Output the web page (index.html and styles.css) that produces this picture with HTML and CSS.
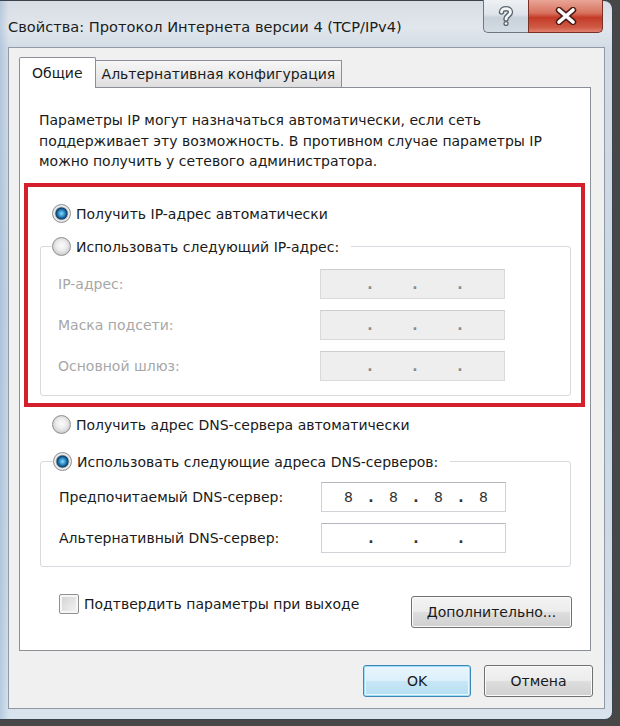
FILE: index.html
```html
<!DOCTYPE html>
<html lang="ru">
<head>
<meta charset="utf-8">
<title>Свойства: Протокол Интернета версии 4 (TCP/IPv4)</title>
<link rel="stylesheet" href="styles.css">
</head>
<body>
<div class="window">
  <div class="titlebar">
    <div class="title">Свойства: Протокол Интернета версии 4 (TCP/IPv4)</div>
    <div class="caption-buttons">
      <div class="cap-btn help">
        <svg width="20" height="22" viewBox="0 0 20 22">
          <path d="M5.5 7 C5.5 2.5 14.5 2.5 14.5 7 C14.5 10.5 10 10.5 10 14" fill="none" stroke="#5b6570" stroke-width="5.5" stroke-linecap="round"/>
          <circle cx="10" cy="18.5" r="2.6" fill="#5b6570"/>
          <path d="M5.5 7 C5.5 2.5 14.5 2.5 14.5 7 C14.5 10.5 10 10.5 10 14" fill="none" stroke="#f4f6f8" stroke-width="2.8" stroke-linecap="round"/>
          <circle cx="10" cy="18.5" r="1.3" fill="#f4f6f8"/>
        </svg>
      </div>
      <div class="cap-btn close">
        <svg width="22" height="18" viewBox="0 0 22 18">
          <path d="M4 3 L18 15 M18 3 L4 15" stroke="#4a1c15" stroke-width="6.5" stroke-linecap="round"/>
          <path d="M4 3 L18 15 M18 3 L4 15" stroke="#ffffff" stroke-width="3.6" stroke-linecap="round"/>
        </svg>
      </div>
    </div>
  </div>

  <div class="client">
    <div class="tabs">
      <div class="tab active">Общие</div>
      <div class="tab">Альтернативная конфигурация</div>
    </div>

    <div class="panel">
      <p class="intro">Параметры IP могут назначаться автоматически, если сеть<br>поддерживает эту возможность. В противном случае параметры IP<br>можно получить у сетевого администратора.</p>

      <div class="highlight">
        <div class="radio-row"><span class="radio checked"></span>Получить IP-адрес автоматически</div>
        <fieldset class="group">
          <legend class="radio-row legend"><span class="radio"></span>Использовать следующий IP-адрес:</legend>
          <div class="field-row disabled">
            <span class="label">IP-адрес:</span>
            <div class="ip"><span></span><span class="dot">.</span><span></span><span class="dot">.</span><span></span><span class="dot">.</span><span></span></div>
          </div>
          <div class="field-row disabled">
            <span class="label">Маска подсети:</span>
            <div class="ip"><span></span><span class="dot">.</span><span></span><span class="dot">.</span><span></span><span class="dot">.</span><span></span></div>
          </div>
          <div class="field-row disabled">
            <span class="label">Основной шлюз:</span>
            <div class="ip"><span></span><span class="dot">.</span><span></span><span class="dot">.</span><span></span><span class="dot">.</span><span></span></div>
          </div>
        </fieldset>
      </div>

      <div class="radio-row dns-auto"><span class="radio"></span>Получить адрес DNS-сервера автоматически</div>
      <fieldset class="group dns">
        <legend class="radio-row legend"><span class="radio checked"></span>Использовать следующие адреса DNS-серверов:</legend>
        <div class="field-row">
          <span class="label">Предпочитаемый DNS-сервер:</span>
          <div class="ip"><span>8</span><span class="dot">.</span><span>8</span><span class="dot">.</span><span>8</span><span class="dot">.</span><span>8</span></div>
        </div>
        <div class="field-row">
          <span class="label">Альтернативный DNS-сервер:</span>
          <div class="ip"><span></span><span class="dot">.</span><span></span><span class="dot">.</span><span></span><span class="dot">.</span><span></span></div>
        </div>
      </fieldset>

      <div class="bottom-row">
        <div class="check-row"><span class="checkbox"></span>Подтвердить параметры при выходе</div>
        <button class="btn advanced">Дополнительно...</button>
      </div>
    </div>

    <div class="dialog-buttons">
      <button class="btn default">OK</button>
      <button class="btn">Отмена</button>
    </div>
  </div>
</div>
</body>
</html>
```

FILE: styles.css
```css
* { box-sizing: border-box; }

html, body {
  margin: 0;
  padding: 0;
}

body {
  width: 620px;
  height: 726px;
  overflow: hidden;
  background: #474747;
  font-family: "DejaVu Sans", "Liberation Sans", sans-serif;
  font-size: 14px;
  color: #1a1a1a;
}

.window {
  width: 613px;
  height: 720px;
  border: 1px solid #3c434b;
  border-left: none;
  border-radius: 0 9px 8px 0;
  background:
    linear-gradient(90deg, rgba(120,160,200,0.35) 0px, rgba(120,160,200,0) 9px),
    linear-gradient(180deg, #d7dde4 0px, #e1e6ec 26px, #d3dce6 46px, #c8d6e4 300px, #cfdbe7 600px, #d8e3ee 720px);
  display: flex;
  flex-direction: column;
}

.titlebar {
  height: 46px;
  display: flex;
  align-items: flex-start;
  padding-left: 8px;
  padding-right: 9px;
}

.title {
  flex: 1;
  padding-top: 16px;
  line-height: 20px;
  font-size: 14.6px;
  color: #1c1c1c;
  white-space: nowrap;
}

.caption-buttons {
  display: flex;
  margin-top: -1px;
}

.cap-btn {
  height: 33px;
  display: flex;
  align-items: center;
  justify-content: center;
  border: 1px solid #6c7782;
  border-top: none;
}

.help {
  width: 45px;
  border-radius: 0 0 0 5px;
  border-right: none;
  background: linear-gradient(180deg, #eef1f4 0%, #dde3e9 45%, #c9d2db 55%, #d3dbe3 100%);
}

.close {
  width: 75px;
  border-color: #7b3026;
  border-radius: 0 0 5px 0;
  background: linear-gradient(180deg, #e9a597 0%, #d9735f 40%, #c43b27 55%, #cf5a45 85%, #e0826e 100%);
}

.client {
  margin-left: 8px;
  width: 597px;
  height: 662px;
  background: #f0f0f0;
  border: 1px solid #8f9aa6;
  padding: 9px 13px 0 10px;
}

.tabs {
  display: flex;
  align-items: flex-end;
  height: 30px;
}

.tab {
  height: 27px;
  line-height: 26px;
  padding: 0 11px;
  border: 1px solid #8c8f96;
  border-bottom: none;
  border-left: none;
  background: linear-gradient(180deg, #f6f6f6 0%, #ebebeb 50%, #dedede 100%);
  color: #1a1a1a;
  white-space: nowrap;
}

.tab.active {
  position: relative;
  z-index: 1;
  height: 31px;
  margin-bottom: -1px;
  line-height: 30px;
  padding: 0 12px;
  border-left: 1px solid #8c8f96;
  border-radius: 2px 2px 0 0;
  background: #ffffff;
}

.tab + .tab {
  width: 246px;
  padding-left: 6px;
}

.panel {
  background: #ffffff;
  border: 1px solid #8a8e95;
  height: 564px;
  padding: 22px 0 0 0;
}

.intro {
  margin: 0 0 0 19px;
  line-height: 20.5px;
}

.highlight {
  margin: 11px 5px 0 4px;
  border: 4px solid #d41f2c;
  padding: 17px 0 7px 0;
}

.radio-row {
  display: flex;
  align-items: center;
  gap: 5px;
  height: 20px;
  line-height: 20px;
  white-space: nowrap;
}

.highlight > .radio-row {
  padding-left: 24px;
}

.radio {
  flex: none;
  width: 19px;
  height: 19px;
  border-radius: 50%;
  border: 1px solid #8d8f91;
  background: radial-gradient(circle at 50% 45%, #fbfbfb 0px, #ececec 5px, #d7d7d7 8px, #c9c9c9 9.5px);
}

.radio.checked {
  background: radial-gradient(circle at 50% 50%, #8fd8f7 0px, #3fa0d6 2.5px, #15629a 4.5px, #0e3e66 5.6px, #9ea4a8 6.3px, #f3f3f3 7.3px, #e2e2e2 8.5px, #cdcdcd 9.5px);
}

.group {
  margin: 13px 10px 0 12px;
  padding: 12px 17px 14px 17px;
  border: 1px solid #d6dadf;
  border-radius: 3px;
  min-width: 0;
}

.legend {
  padding: 0 12px 0 0;
  margin-left: -6px;
}

.field-row {
  display: flex;
  align-items: center;
  height: 30px;
}

.field-row + .field-row {
  margin-top: 11px;
}

.label {
  width: 262px;
  flex: none;
  white-space: nowrap;
}

.ip {
  width: 185px;
  height: 30px;
  display: grid;
  grid-template-columns: 43px 2px 43px 2px 43px 2px 43px;
  align-items: center;
  padding-left: 5px;
  border: 1px solid #cfd3d8;
  border-top-color: #b3b8be;
  background: #ffffff;
  color: #333333;
  line-height: 28px;
}

.ip span {
  text-align: center;
}

.ip .dot {
  display: flex;
  justify-content: center;
  font-weight: bold;
}

.disabled .label {
  color: #a7a7a7;
}

.disabled .ip {
  background: #eeeeee;
  border-color: #d9d9d9;
  border-top-color: #cdcdcd;
  color: #8a8a8a;
}

.dns-auto {
  margin: 8px 0 0 32px;
}

.group.dns {
  margin: 17px 19px 0 20px;
  padding: 10px 17px 13px 18px;
}

.bottom-row {
  display: flex;
  align-items: flex-start;
  margin: 27px 18px 0 39px;
}

.check-row {
  display: flex;
  align-items: center;
  gap: 5px;
  height: 20px;
  white-space: nowrap;
}

.checkbox {
  flex: none;
  width: 20px;
  height: 20px;
  border: 1px solid #8f9193;
  border-radius: 2px;
  background: linear-gradient(135deg, #cfd0d1 0%, #e3e3e3 50%, #f5f5f5 100%);
  box-shadow: inset 0 0 0 2px #f6f6f6;
}

.btn {
  height: 32px;
  border: 1px solid #707070;
  border-radius: 3px;
  background: linear-gradient(180deg, #f3f3f3 0%, #ececec 48%, #dddddd 52%, #d0d0d0 100%);
  box-shadow: inset 0 0 0 1px #fbfbfb;
  font-family: "DejaVu Sans", "Liberation Sans", sans-serif;
  font-size: 14px;
  color: #1a1a1a;
  padding: 0;
}

.advanced {
  margin-left: auto;
  margin-top: 2px;
  width: 161px;
}

.dialog-buttons {
  display: flex;
  justify-content: flex-end;
  gap: 13px;
  margin-top: 14px;
  margin-right: -2px;
}

.dialog-buttons .btn {
  width: 109px;
}

.btn.default {
  width: 108px;
  border-color: #3d88b8;
  background: linear-gradient(180deg, #eaf6fc 0%, #dcf0fa 48%, #c6e6f6 52%, #b7def2 100%);
  box-shadow: inset 0 0 0 1px #9fdcf7, inset 0 0 0 2px #e9f7fd;
}
```
